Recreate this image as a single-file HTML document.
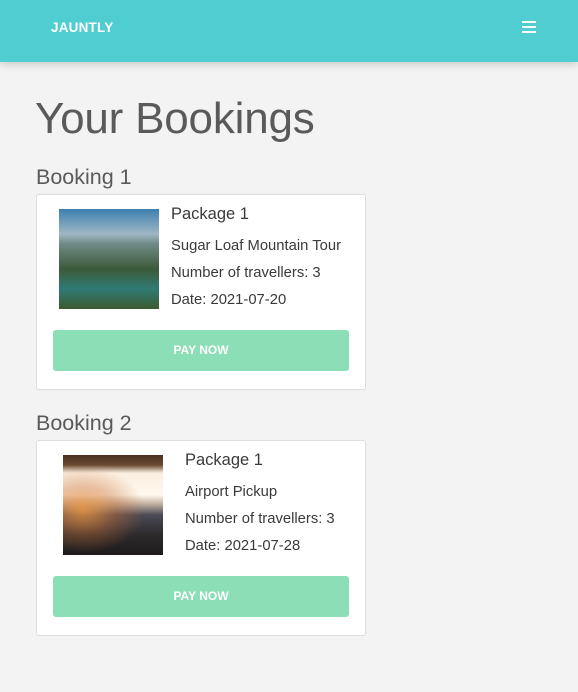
<!DOCTYPE html>
<html><head><meta charset="utf-8"><style>
*{box-sizing:border-box;margin:0;padding:0}
body{width:578px;height:692px;background:#f3f3f3;font-family:"Liberation Sans",Arial,sans-serif;color:#444;overflow:hidden;position:relative}
.nav{position:absolute;left:0;top:0;width:578px;height:62px;background:#50cdd1;box-shadow:0 2px 8px rgba(0,0,0,.18)}
.logo{position:absolute;left:51px;top:20px;color:#fff;font-weight:bold;font-size:13.5px;letter-spacing:.2px}
.burger{position:absolute;left:522px;top:21px;width:14px}
.burger i{display:block;height:2px;background:#fff;margin-bottom:3px}
h1{position:absolute;left:35px;top:94px;font-weight:300;font-size:44px;color:#5a5a5a;letter-spacing:-.2px}
h2{position:absolute;left:36px;font-weight:300;font-size:21.5px;color:#5a5a5a}
.card{position:absolute;left:36px;width:330px;height:196px;background:#fff;border:1px solid #ddd;border-radius:3px}
.img{position:absolute;width:100px;height:100px}
.t{position:absolute;font-size:14.8px;color:#3a3a3a}
.t1{font-size:16.5px}
.btn{position:absolute;left:16px;top:135px;width:296px;height:41px;background:#8bdeb6;border-radius:3px;color:#fff;font-weight:bold;font-size:12px;text-align:center;line-height:41px}
</style></head><body>
<div class="nav"><div class="logo">JAUNTLY</div><div class="burger"><i></i><i></i><i></i></div></div>
<h1>Your Bookings</h1>
<h2 style="top:165px">Booking 1</h2>
<div class="card" style="top:194px">
<div class="img" style="left:22px;top:14px;background:linear-gradient(180deg,#3c7fb0 0%,#9fb7c4 25%,#6f8a86 35%,#3d5a3a 60%,#2f7a74 80%,#3b5a2e 100%)"></div>
<div class="t t1" style="left:134px;top:10px">Package 1</div>
<div class="t" style="left:134px;top:43px">Sugar Loaf Mountain Tour</div>
<div class="t" style="left:134px;top:70px">Number of travellers: 3</div>
<div class="t" style="left:134px;top:97px">Date: 2021-07-20</div>
<div class="btn">PAY NOW</div>
</div>
<h2 style="top:411px">Booking 2</h2>
<div class="card" style="top:440px">
<div class="img" style="left:26px;top:14px;background:radial-gradient(ellipse at 20% 55%,rgba(240,150,60,.8) 0%,rgba(200,110,50,.4) 30%,rgba(0,0,0,0) 55%),linear-gradient(180deg,#4a3020 0%,#6a4a30 10%,#fbeee0 18%,#fff8ee 40%,#c9b8a8 48%,#4a4a55 60%,#2c2a2c 80%,#1e1a1a 100%)"></div>
<div class="t t1" style="left:148px;top:10px">Package 1</div>
<div class="t" style="left:148px;top:43px">Airport Pickup</div>
<div class="t" style="left:148px;top:70px">Number of travellers: 3</div>
<div class="t" style="left:148px;top:97px">Date: 2021-07-28</div>
<div class="btn">PAY NOW</div>
</div>
</body></html>
